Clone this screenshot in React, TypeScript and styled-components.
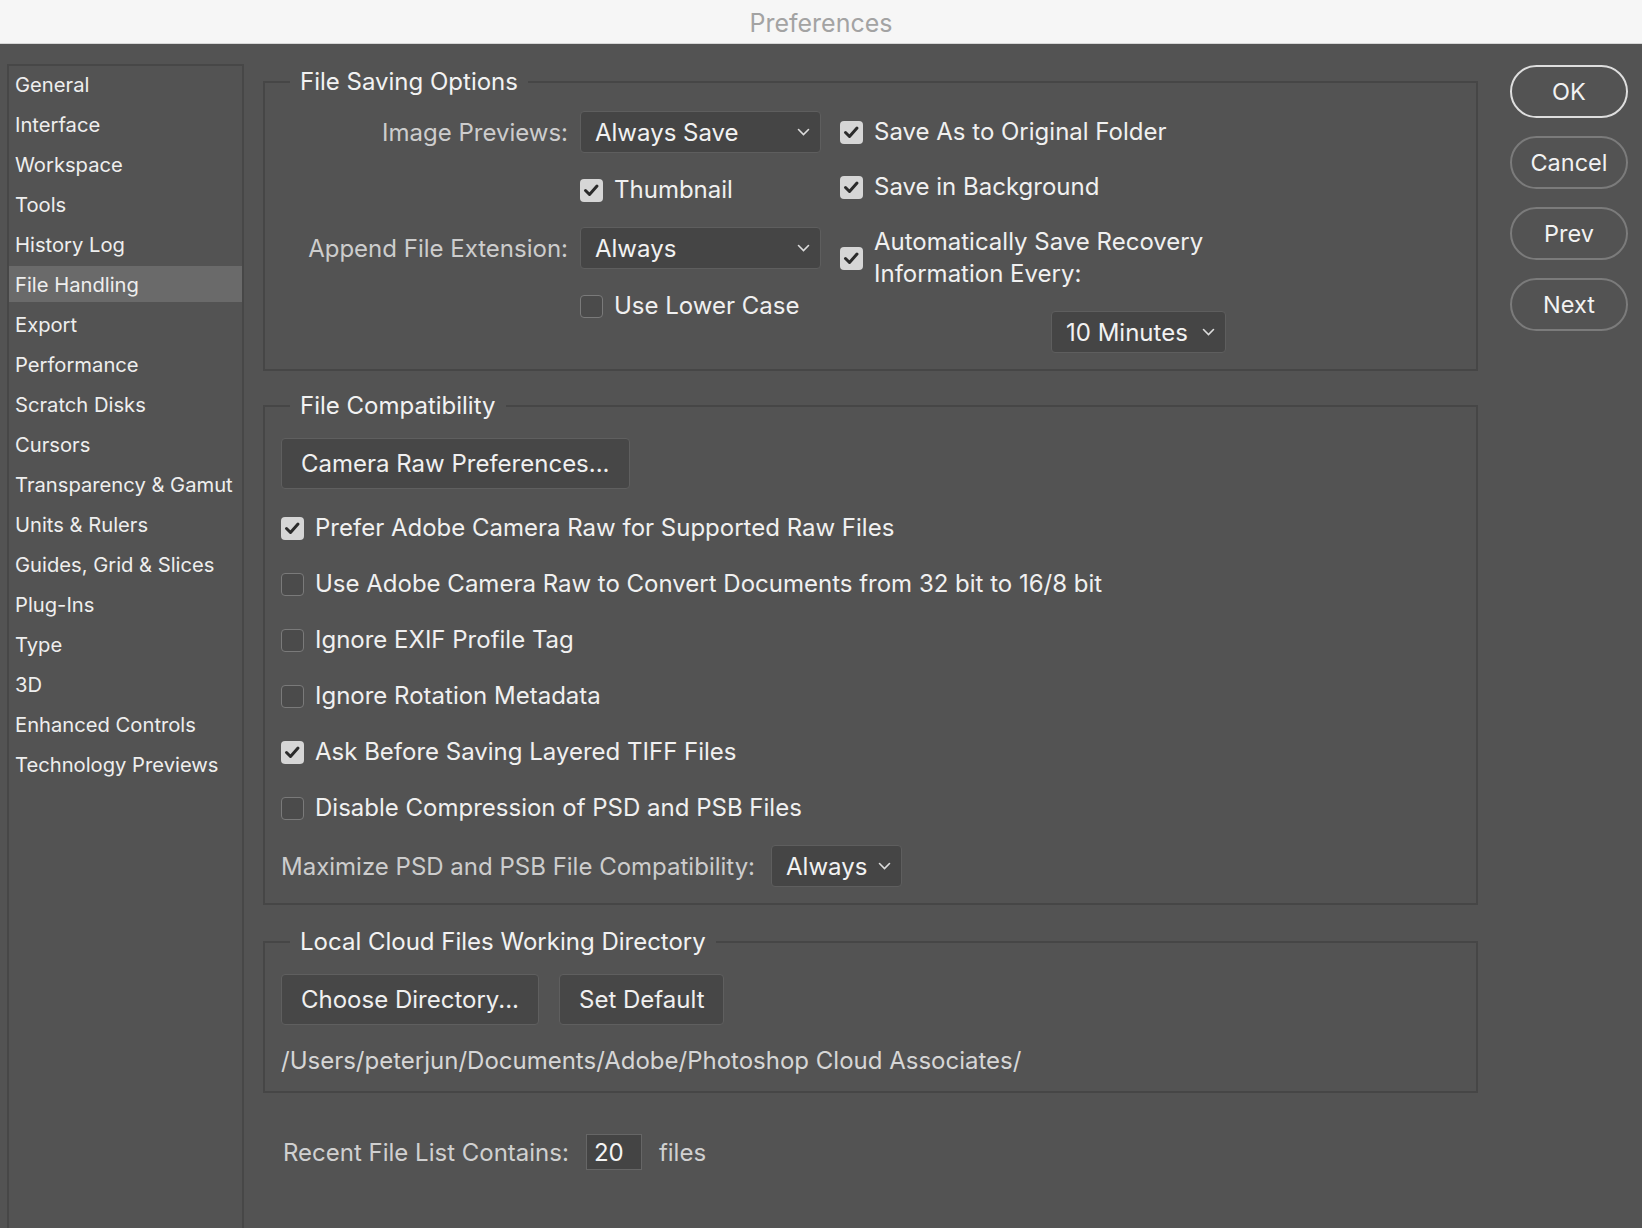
import React from 'react';
import styled, {createGlobalStyle} from 'styled-components';

const GlobalStyle = createGlobalStyle`
  html, body {
    margin: 0;
    padding: 0;
    background: #535353;
  }
  body {
    font-family: Inter, "Noto Sans", sans-serif;
    color: #f0f0f0;
  }
  * {
    box-sizing: border-box;
  }
`

const Window = styled.div`
  min-height: 100vh;
  display: flex;
  flex-direction: column;
  background: #535353;
`
const TitleBar = styled.div`
  height: 44px;
  background: #f6f6f6;
  border-bottom: 1px solid #d6d6d6;
  display: flex;
  align-items: center;
  justify-content: center;
  padding-top: 3px;
  font-size: 25px;
  color: #a3a3a3;
`
const Body = styled.div`
  flex: 1;
  display: flex;
  align-items: stretch;
  padding: 20px 14px 0 7px;
`
const Sidebar = styled.nav`
  width: 237px;
  flex: none;
  border: 2px solid #474747;
  border-bottom: none;
  display: flex;
  flex-direction: column;
  gap: 4px;
`
const NavItem = styled.div<{ $active?: boolean }>`
  height: 36px;
  display: flex;
  align-items: center;
  padding-left: 6px;
  font-size: 20.2px;
  color: #eeeeee;
  background: ${p => p.$active ? '#6a6a6a' : 'transparent'};
`
const Main = styled.main`
  width: 1215px;
  flex: none;
  margin: 4px 0 0 19px;
  display: flex;
  flex-direction: column;
`
const Group = styled.fieldset<{ $gap?: number; $top?: number }>`
  margin: ${p => p.$gap ?? 0}px 0 0 0;
  border: 2px solid #464646;
  padding: ${p => p.$top ?? 15}px 16px 16px 16px;
  min-width: 0;
`
const Legend = styled.legend`
  font-size: 24px;
  line-height: 28px;
  padding: 0 10px;
  margin-left: 9px;
  color: #f2f2f2;
`
const SavingLayout = styled.div`
  display: flex;
  gap: 19px;
  align-items: flex-start;
`
const FormGrid = styled.div`
  display: grid;
  grid-template-columns: 287px 241px;
  grid-auto-rows: 42px;
  column-gap: 12px;
  row-gap: 16px;
  align-items: center;
`
const FieldLabel = styled.span`
  font-size: 24px;
  color: #cdcdcd;
  text-align: right;
  white-space: nowrap;
`
const RightColumn = styled.div`
  width: 386px;
  display: flex;
  flex-direction: column;
  gap: 13px;
`
const CheckRow = styled.label<{ $h?: number; $mt?: number }>`
  display: flex;
  align-items: center;
  gap: 11px;
  min-height: ${p => p.$h ?? 42}px;
  margin-top: ${p => p.$mt ?? 0}px;
  font-size: 24px;
  line-height: 32px;
  color: #f0f0f0;
  white-space: nowrap;
`
const Box = styled.span<{ $checked?: boolean }>`
  width: 23px;
  height: 23px;
  flex: none;
  border-radius: 4px;
  display: flex;
  align-items: center;
  justify-content: center;
  background: ${p => p.$checked ? '#d6d6d6' : '#4b4b4b'};
  border: ${p => p.$checked ? 'none' : '1.5px solid #7a7a7a'};
`
const SelectBox = styled.div<{ $w: number; $right?: boolean; $mt?: number }>`
  width: ${p => p.$w}px;
  height: 42px;
  flex: none;
  display: flex;
  align-items: center;
  justify-content: space-between;
  gap: 8px;
  padding: 0 10px 0 14px;
  margin-top: ${p => p.$mt ?? 0}px;
  background: #454545;
  border: 1px solid #5e5e5e;
  border-radius: 4px;
  font-size: 24px;
  color: #f2f2f2;
  align-self: ${p => p.$right ? 'flex-end' : 'auto'};
`
const Stack = styled.div`
  display: flex;
  flex-direction: column;
  align-items: flex-start;
  gap: 16px;
`
const RectButton = styled.button<{ $mb?: number }>`
  height: 51px;
  padding: 0 19px;
  margin-bottom: ${p => p.$mb ?? 0}px;
  background: #474747;
  border: 1.5px solid #5f5f5f;
  border-radius: 4px;
  font-family: inherit;
  font-size: 24px;
  color: #f0f0f0;
`
const InlineRow = styled.div<{ $h?: number; $mt?: number }>`
  display: flex;
  align-items: center;
  gap: 20px;
  height: ${p => p.$h ?? 42}px;
  margin-top: ${p => p.$mt ?? 0}px;
`
const PlainText = styled.div`
  font-size: 24px;
  line-height: 28px;
  color: #d6d6d6;
  margin-top: 22px;
`
const RecentRow = styled.div`
  margin: 41px 0 0 20px;
  height: 36px;
  display: flex;
  align-items: center;
  gap: 17px;
  font-size: 24px;
  color: #d0d0d0;
`
const NumberBox = styled.div`
  width: 56px;
  height: 36px;
  display: flex;
  align-items: center;
  padding-left: 7px;
  background: #444444;
  border: 1.5px solid #666666;
  color: #f4f4f4;
`
const Actions = styled.div`
  width: 118px;
  flex: none;
  margin: 1px 0 0 32px;
  display: flex;
  flex-direction: column;
  gap: 18px;
`
const PillButton = styled.button<{ $primary?: boolean }>`
  height: 53px;
  border-radius: 27px;
  background: transparent;
  border: 2px solid ${p => p.$primary ? '#dedede' : '#7b7b7b'};
  font-family: inherit;
  font-size: 23.5px;
  color: #f2f2f2;
`

const Chevron = () => (
    <svg width="13" height="8" viewBox="0 0 13 8">
        <path d="M1.5 1.5 L6.5 6.5 L11.5 1.5" fill="none" stroke="#dcdcdc" strokeWidth="1.6" strokeLinecap="round"/>
    </svg>
)

const Check = ({checked}: { checked?: boolean }) => (
    <Box $checked={checked}>
        {checked && <svg width="17" height="15" viewBox="0 0 17 15">
            <path d="M2.5 7.5 L6.5 11.5 L14 3" fill="none" stroke="#2b2b2b" strokeWidth="3" strokeLinecap="round" strokeLinejoin="round"/>
        </svg>}
    </Box>
)

const Select = ({value, width, right, mt}: { value: string, width: number, right?: boolean, mt?: number }) => (
    <SelectBox $w={width} $right={right} $mt={mt}>
        <span>{value}</span>
        <Chevron/>
    </SelectBox>
)

const sections = [
    "General", "Interface", "Workspace", "Tools", "History Log", "File Handling", "Export",
    "Performance", "Scratch Disks", "Cursors", "Transparency & Gamut", "Units & Rulers",
    "Guides, Grid & Slices", "Plug-Ins", "Type", "3D", "Enhanced Controls", "Technology Previews"
]

const compatibility = [
    {label: "Prefer Adobe Camera Raw for Supported Raw Files", checked: true},
    {label: "Use Adobe Camera Raw to Convert Documents from 32 bit to 16/8 bit", checked: false},
    {label: "Ignore EXIF Profile Tag", checked: false},
    {label: "Ignore Rotation Metadata", checked: false},
    {label: "Ask Before Saving Layered TIFF Files", checked: true},
    {label: "Disable Compression of PSD and PSB Files", checked: false},
]

export default function App() {
    return (
        <Window>
            <GlobalStyle/>
            <TitleBar>Preferences</TitleBar>
            <Body>
                <Sidebar>
                    {sections.map(s => <NavItem key={s} $active={s === "File Handling"}>{s}</NavItem>)}
                </Sidebar>

                <Main>
                    <Group>
                        <Legend>File Saving Options</Legend>
                        <SavingLayout>
                            <FormGrid>
                                <FieldLabel>Image Previews:</FieldLabel>
                                <Select value="Always Save" width={241}/>
                                <span/>
                                <CheckRow><Check checked/>Thumbnail</CheckRow>
                                <FieldLabel>Append File Extension:</FieldLabel>
                                <Select value="Always" width={241}/>
                                <span/>
                                <CheckRow><Check/>Use Lower Case</CheckRow>
                            </FormGrid>
                            <RightColumn>
                                <CheckRow><Check checked/>Save As to Original Folder</CheckRow>
                                <CheckRow><Check checked/>Save in Background</CheckRow>
                                <CheckRow $h={62} $mt={5}>
                                    <Check checked/>
                                    <span>Automatically Save Recovery<br/>Information Every:</span>
                                </CheckRow>
                                <Select value="10 Minutes" width={175} right mt={8}/>
                            </RightColumn>
                        </SavingLayout>
                    </Group>

                    <Group $gap={21} $top={18}>
                        <Legend>File Compatibility</Legend>
                        <Stack>
                            <RectButton $mb={3}>Camera Raw Preferences...</RectButton>
                            {compatibility.map(c => (
                                <CheckRow key={c.label} $h={40}><Check checked={c.checked}/>{c.label}</CheckRow>
                            ))}
                            <InlineRow $mt={1} style={{gap: 16}}>
                                <FieldLabel>Maximize PSD and PSB File Compatibility:</FieldLabel>
                                <Select value="Always" width={131}/>
                            </InlineRow>
                        </Stack>
                    </Group>

                    <Group $gap={23} $top={18}>
                        <Legend>Local Cloud Files Working Directory</Legend>
                        <InlineRow $h={51}>
                            <RectButton>Choose Directory...</RectButton>
                            <RectButton>Set Default</RectButton>
                        </InlineRow>
                        <PlainText>/Users/peterjun/Documents/Adobe/Photoshop Cloud Associates/</PlainText>
                    </Group>

                    <RecentRow>
                        <span>Recent File List Contains:</span>
                        <NumberBox>20</NumberBox>
                        <span>files</span>
                    </RecentRow>
                </Main>

                <Actions>
                    <PillButton $primary>OK</PillButton>
                    <PillButton>Cancel</PillButton>
                    <PillButton>Prev</PillButton>
                    <PillButton>Next</PillButton>
                </Actions>
            </Body>
        </Window>
    );
}
